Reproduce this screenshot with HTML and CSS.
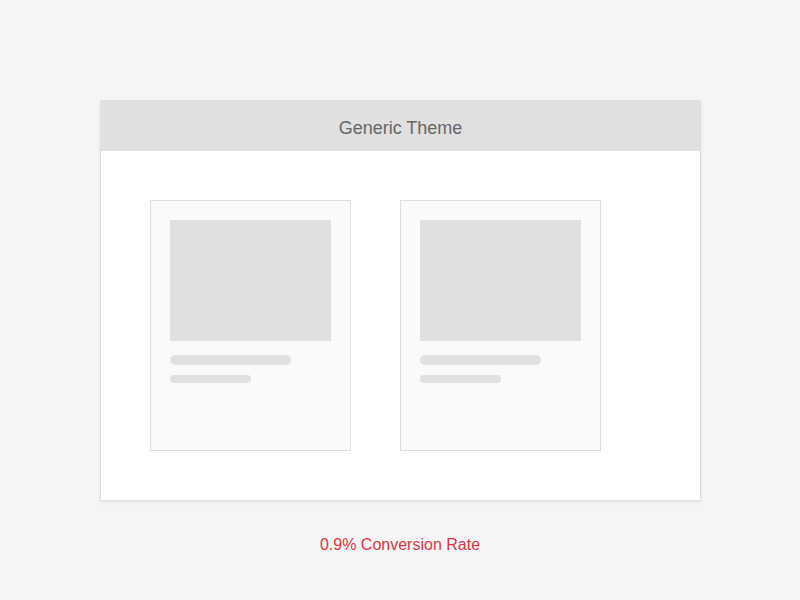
FILE: index.html
```html
<!DOCTYPE html>
<html>
<head>
<meta charset="utf-8">
<link rel="stylesheet" href="styles.css">
</head>
<body>
<div class="page">
  <div class="frame">
    <div class="frame-header">Generic Theme</div>
    <div class="frame-body">
      <div class="card">
        <div class="card-image"></div>
        <div class="line line-long"></div>
        <div class="line line-short"></div>
      </div>
      <div class="card">
        <div class="card-image"></div>
        <div class="line line-long"></div>
        <div class="line line-short"></div>
      </div>
    </div>
  </div>
  <div class="stat">0.9% Conversion Rate</div>
</div>
</body>
</html>
```
FILE: styles.css
```css
html, body {
  margin: 0;
  padding: 0;
  background: #f5f5f5;
  font-family: "Liberation Sans", Arial, sans-serif;
}
.page {
  display: flex;
  flex-direction: column;
  align-items: flex-start;
  padding: 100px 0 0 100px;
}
.frame {
  width: 601px;
  height: 401px;
  box-sizing: border-box;
  background: #ffffff;
  border: 1px solid #dddddd;
  box-shadow: 0 1px 3px rgba(0,0,0,0.08);
  display: flex;
  flex-direction: column;
}
.frame-header {
  height: 51px;
  box-sizing: border-box;
  margin: -1px -1px 0 -1px;
  padding-top: 6px;
  background: #e0e0e0;
  color: #666666;
  font-size: 18px;
  display: flex;
  align-items: center;
  justify-content: center;
}
.frame-body {
  display: flex;
  gap: 49px;
  padding: 49px 49px;
}
.card {
  width: 201px;
  height: 251px;
  box-sizing: border-box;
  background: #fafafa;
  border: 1px solid #dddddd;
  padding: 19px;
  display: flex;
  flex-direction: column;
}
.card-image {
  width: 161px;
  height: 121px;
  background: #e0e0e0;
}
.line {
  background: #e0e0e0;
  border-radius: 5px;
}
.line-long {
  width: 121px;
  height: 10px;
  margin-top: 14px;
}
.line-short {
  width: 81px;
  height: 8px;
  margin-top: 10px;
  border-radius: 4px;
}
.stat {
  width: 600px;
  text-align: center;
  margin-top: 35px;
  color: #dc3545;
  font-size: 16px;
  line-height: 18px;
}
```
